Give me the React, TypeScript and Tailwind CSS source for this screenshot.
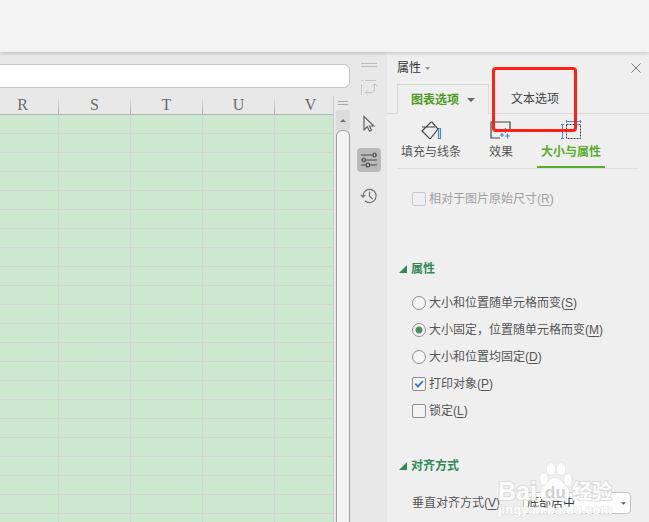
import React, { useState } from 'react';

const COLUMNS = ['R', 'S', 'T', 'U', 'V'];
const ROWS = Array.from({ length: 22 }, (_, i) => i);

const PLACEMENTS = [
  { id: 'move-size', label: '大小和位置随单元格而变', accessKey: 'S' },
  { id: 'move', label: '大小固定，位置随单元格而变', accessKey: 'M' },
  { id: 'fixed', label: '大小和位置均固定', accessKey: 'D' },
];

const Caret = ({ className }: { className: string }) => (
  <svg viewBox="0 0 8 4" className={className} fill="currentColor"><path d="M0 0h8L4 4z" /></svg>
);

const KeyLabel = ({ text, accessKey }: { text: string; accessKey: string }) => (
  <span className="whitespace-nowrap">{text}(<span className="underline underline-offset-2">{accessKey}</span>)</span>
);

const SectionTitle = ({ children }: { children: React.ReactNode }) => (
  <h3 className="flex items-center gap-1 h-5 pl-3 font-bold text-[#2f8a57]">
    <svg viewBox="0 0 8 8" className="w-2 h-2" fill="currentColor"><path d="M8 0v8H0z" /></svg>
    {children}
  </h3>
);

interface CheckRowProps {
  text: string;
  accessKey: string;
  checked: boolean;
  disabled?: boolean;
  onChange?: (v: boolean) => void;
}

const CheckRow: React.FC<CheckRowProps> = ({ text, accessKey, checked, disabled, onChange }) => (
  <label className={`flex items-center gap-[3px] h-[27px] ${disabled ? 'text-[#a0a0a0]' : 'text-[#555555]'}`}>
    <span className="grid">
      <input
        type="checkbox"
        checked={checked}
        disabled={disabled}
        onChange={e => onChange?.(e.target.checked)}
        className="col-start-1 row-start-1 appearance-none w-[14px] h-[14px] rounded-xs border border-[#8e8e8e] bg-[#f4f4f4] disabled:border-[#c8c8c8] disabled:bg-[#efefef]"
      />
      {checked && (
        <svg viewBox="0 0 14 14" className="col-start-1 row-start-1 w-[14px] h-[14px] pointer-events-none" fill="none" stroke="#4176cc" strokeWidth="1.9">
          <path d="M3.3 6.6l2.6 2.9 5-5.3" />
        </svg>
      )}
    </span>
    <KeyLabel text={text} accessKey={accessKey} />
  </label>
);

const Sheet = () => (
  <div className="flex-1 min-w-0 flex flex-col">
    <input aria-label="编辑栏" className="h-6 mt-3 bg-white border border-l-0 border-[#c8c8c8] rounded-r-md outline-none px-2" />
    <div className="flex-1 flex mt-2">
      <div className="flex-1 min-w-0 flex justify-center overflow-hidden border-r border-[#cfcfcf] bg-[#cce8cf]">
        <table className="table-fixed border-separate border-spacing-0 w-[360px] shrink-0 self-start">
          <thead>
            <tr className="h-[19px] bg-[#e8e8e8]">
              {COLUMNS.map(c => (
                <th key={c} className="relative p-0 font-normal text-base leading-[18px] text-[#6c6c6c] border-b border-[#b4b4b4] font-['Liberation_Serif',serif]">
                  {c}
                  <span className="absolute right-0 inset-y-0 w-px bg-linear-to-b from-[#e8e8e8] to-[#aaaaaa]" />
                </th>
              ))}
            </tr>
          </thead>
          <tbody>
            {ROWS.map(r => (
              <tr key={r} className="h-[19px]">
                {COLUMNS.map(c => <td key={c} className="p-0 border-r border-b border-[#d4d2d5]" />)}
              </tr>
            ))}
          </tbody>
        </table>
      </div>
      <div className="w-4 pl-0.5 flex flex-col">
        <div className="h-[14px] flex flex-col justify-center gap-0.5 px-0.5">
          <div className="h-px bg-[#a8a8a8]" />
          <div className="h-px bg-[#a8a8a8]" />
        </div>
        <button aria-label="向上滚动" className="h-5 bg-[#dcdcdc] flex items-center justify-center text-[#707070]">
          <Caret className="w-[6px] h-[3px] rotate-180" />
        </button>
        <div className="flex-1 bg-[#f3f3f3] border border-b-0 border-[#a0a0a0] rounded-t-md" />
      </div>
    </div>
  </div>
);

const ToolStrip = () => (
  <div className="w-[37px] shrink-0 flex flex-col items-center gap-3 pt-[11px]">
    <div className="w-4 flex flex-col gap-[2px] mb-[-3px]">
      <div className="h-px bg-[#bcbcbc]" />
      <div className="h-px bg-[#bcbcbc]" />
    </div>
    <button aria-label="转换" className="w-6 h-6 flex items-center justify-center text-[#c6c6c6]">
      <svg viewBox="0 0 16 16" className="w-4 h-4" fill="none" stroke="currentColor">
        <path d="M4 .5h11M.5 4v11M0 .5h2M4 12.5h6.500q3 0 3-3V4M10.500 6.500l3-3 3 3M7 9.500l-3 3 3 3" />
      </svg>
    </button>
    <button aria-label="选择" className="w-6 h-6 flex items-center justify-center text-[#666666]">
      <svg viewBox="0 0 16 18" className="w-4 h-[18px]" fill="none" stroke="currentColor" strokeWidth="1.2">
        <path d="M3 1.500v13.300l3.300-3 2.200 4.300 2-1-2-4.100h4.300z" />
      </svg>
    </button>
    <button aria-label="属性" className="w-6 h-6 rounded-sm bg-[#b9b9b9] flex items-center justify-center text-[#4c4c4c]">
      <svg viewBox="0 0 18 16" className="w-[18px] h-4" fill="none" stroke="currentColor" strokeWidth="1.2">
        <path d="M1 3h12M16 3h1M1 8h1.500M5.500 8H17M1 13h5M10 13h7" />
        <ellipse cx="14.500" cy="3" rx="1.500" ry="2" />
        <ellipse cx="4" cy="8" rx="1.500" ry="2" />
        <ellipse cx="8" cy="13" rx="1.700" ry="2" />
      </svg>
    </button>
    <button aria-label="历史" className="w-6 h-6 flex items-center justify-center text-[#707070]">
      <svg viewBox="0 0 18 16" className="w-[18px] h-4" fill="none" stroke="currentColor" strokeWidth="1.2">
        <path d="M3 9V7.500A6.600 6.600 0 1 1 5 12.700M.8 6.800L3 9.200l2.300-2.400M9.500 3.500V8l3 3.200" />
      </svg>
    </button>
  </div>
);

const Watermark = () => (
  <svg viewBox="0 0 120 60" className="absolute bottom-3 right-[32px] w-[120px] h-[60px] pointer-events-none" fill="#ffffff" stroke="#dadada" strokeWidth="1" paintOrder="stroke" opacity="0.9">
    <text x="1" y="39" fontSize="25" fontWeight="bold" fontFamily="Liberation Sans, sans-serif" strokeWidth="2">Bai</text>
    <ellipse cx="47" cy="18" rx="4" ry="6" />
    <ellipse cx="54" cy="8" rx="4.500" ry="6" />
    <ellipse cx="64" cy="8" rx="4.500" ry="6" />
    <ellipse cx="71" cy="19" rx="4" ry="6" />
    <path d="M58 17c6 0 7 5 11 8s6 14-2 15c-4 .5-6-1-9-1s-5 1.500-9 1c-8-1-6-12-2-15s5-8 11-8z" />
    <text x="48" y="37" fontSize="17" fontWeight="bold" fontFamily="Liberation Sans, sans-serif" fill="#cfcfcf" stroke="none">du</text>
    <text x="75" y="38" fontSize="20" fontWeight="bold" fontFamily="Noto Sans CJK SC, sans-serif" strokeWidth="2">经验</text>
    <text x="1" y="53" fontSize="13" fontWeight="bold" fontFamily="Liberation Sans, sans-serif" strokeWidth="1">jingyan.baidu.com</text>
  </svg>
);

const PropertyPanel = () => {
  const [placement, setPlacement] = useState('move');
  const [printable, setPrintable] = useState(true);
  const [locked, setLocked] = useState(false);
  const [align, setAlign] = useState('底部居中');

  return (
    <aside className="relative w-[262px] shrink-0 bg-[#efefef] text-[#555555]">
      <div className="h-8 flex items-center justify-between pl-[10px] pr-2">
        <button className="flex items-center gap-1 text-[#333333]">属性<Caret className="w-[5px] h-[3px] text-[#808080]" /></button>
        <button aria-label="关闭" className="text-[#777777]">
          <svg viewBox="0 0 10 10" className="w-[10px] h-[10px]" fill="none" stroke="currentColor"><path d="M.5.5l9 9M9.500.5l-9 9" /></svg>
        </button>
      </div>

      <div className="flex h-[30px]">
        <div className="w-[10px] border-b border-[#d8d8d8]" />
        <button className="w-[92px] flex items-center justify-center gap-2 border border-b-0 border-[#d8d8d8] font-bold text-[#4f9a22]">
          图表选项<Caret className="w-2 h-1 text-[#666666]" />
        </button>
        <div className="relative flex-1 flex pl-[22px] border-b border-[#d8d8d8]">
          <button className="text-[#444444]">文本选项</button>
          <div className="absolute left-[3px] top-[-17px] w-[85px] h-[65px] rounded-sm border-3 border-[#ff2114] pointer-events-none" />
        </div>
      </div>

      <div className="flex mx-[10px] mt-1 border-b border-[#dddddd]">
        <button className="w-[68px] h-[50px] flex flex-col items-center gap-1 pt-0.5">
          <svg viewBox="0 0 22 20" className="w-[22px] h-5" fill="none" stroke="#444444" strokeWidth="1.2">
            <path d="M2 11l9-9h1l6 7-7.500 9.500h-1zM2 7h13" />
            <path d="M18.500 8.500h2v10h-2z" stroke="#4a86d8" />
          </svg>
          <span>填充与线条</span>
        </button>
        <button className="w-[72px] h-[50px] flex flex-col items-center gap-1 pt-0.5">
          <svg viewBox="0 0 22 20" className="w-[22px] h-5" fill="none" stroke="#444444" strokeWidth="1.2">
            <path d="M10 18H1V2h19v8" />
            <path d="M15.500 8v5M13 10.500h5M12 13v4M10 15h4M17.500 13.500v5M15 16h5" stroke="#4a86d8" />
          </svg>
          <span>效果</span>
        </button>
        <button className="w-[68px] h-[50px] mb-[-1px] flex flex-col items-center gap-1 pt-0.5 border-b-2 border-[#5aad2a] font-bold text-[#5aad2a]">
          <svg viewBox="0 0 22 20" className="w-[22px] h-5" fill="none" stroke="#4a86d8">
            <path d="M6 1.500h15M6.500 0v3M20.500 0v3M2.500 4v15M1 4.500h3M1 18.500h3" />
            <path d="M6.500 4.500h14v14h-14z" stroke="#444444" strokeDasharray="2 1" />
          </svg>
          <span>大小与属性</span>
        </button>
      </div>

      <div className="pl-[25px] mt-4">
        <CheckRow text="相对于图片原始尺寸" accessKey="R" checked={false} disabled />
      </div>

      <div className="mt-[47px]">
        <SectionTitle>属性</SectionTitle>
        <div className="pl-[25px] mt-[10px]">
          {PLACEMENTS.map(p => (
            <label key={p.id} className="flex items-center gap-[3px] h-[27px]">
              <input
                type="radio"
                name="placement"
                checked={placement === p.id}
                onChange={() => setPlacement(p.id)}
                className="appearance-none w-[14px] h-[14px] rounded-full border border-[#8e8e8e] bg-[#f4f4f4] checked:bg-[radial-gradient(circle,#4a8f66_3px,#f4f4f4_4px)]"
              />
              <KeyLabel text={p.label} accessKey={p.accessKey} />
            </label>
          ))}
          <CheckRow text="打印对象" accessKey="P" checked={printable} onChange={setPrintable} />
          <CheckRow text="锁定" accessKey="L" checked={locked} onChange={setLocked} />
        </div>
      </div>

      <div className="mt-8">
        <SectionTitle>对齐方式</SectionTitle>
        <div className="flex items-center justify-between h-[22px] pl-[25px] pr-[18px] mt-4">
          <label htmlFor="valign"><KeyLabel text="垂直对齐方式" accessKey="V" /></label>
          <div className="grid items-center">
            <select
              id="valign"
              value={align}
              onChange={e => setAlign(e.target.value)}
              className="col-start-1 row-start-1 appearance-none w-[108px] h-[22px] pl-[3px] bg-white border border-[#c4c4c4] rounded-sm text-[#333333]"
            >
              <option>顶部居中</option>
              <option>中部居中</option>
              <option>底部居中</option>
            </select>
            <Caret className="col-start-1 row-start-1 justify-self-end mr-[5px] w-[5px] h-[3px] text-[#555555] pointer-events-none" />
          </div>
        </div>
      </div>
      <Watermark />
    </aside>
  );
};

const App = () => (
  <div className="min-h-screen flex flex-col bg-[#e8e8e8] overflow-hidden text-xs leading-4 font-['Liberation_Sans','Noto_Sans_CJK_SC',sans-serif]">
    <header className="h-[52px] bg-[#f3f3f3] shadow-[0_1px_4px_rgba(0,0,0,0.2)] z-10" />
    <main className="flex-1 flex">
      <Sheet />
      <ToolStrip />
      <PropertyPanel />
    </main>
  </div>
);

export default App;
